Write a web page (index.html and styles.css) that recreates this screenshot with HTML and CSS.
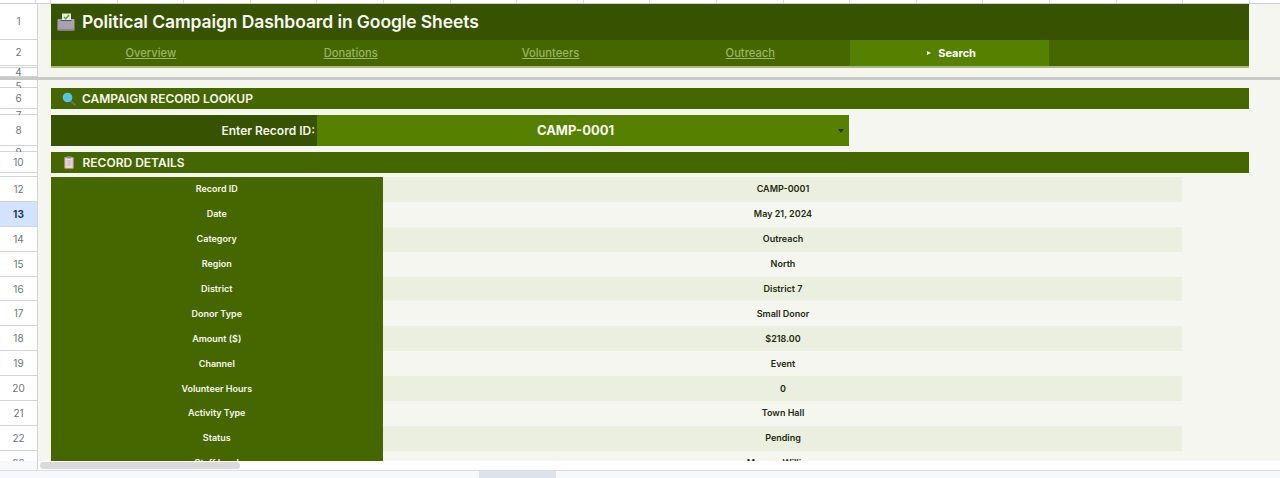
FILE: index.html
```html
<!DOCTYPE html>
<html lang="en">
<head>
<meta charset="utf-8">
<title>Political Campaign Dashboard in Google Sheets</title>
<link rel="stylesheet" href="styles.css">
</head>
<body>
<div class="app">
  <div class="colstrip"></div>
  <div class="grid">
    <div class="row h36"><div class="rh up">1</div><div class="cells"><div class="title">
      <svg class="ic-ballot" viewBox="0 0 18 18"><rect x="0.5" y="6" width="17" height="11.5" rx="1" fill="#a9a1b2"/><rect x="0.5" y="15.8" width="17" height="1.7" fill="#8f8898"/><rect x="5" y="0.5" width="9" height="7" fill="#e4ebe2"/><path d="M7 4l1.8 1.8L12 2" fill="none" stroke="#4f9a5a" stroke-width="1.4"/><rect x="3.5" y="7" width="11" height="1.1" fill="#5d5666"/></svg>
      <span>Political Campaign Dashboard in Google Sheets</span></div></div></div>
    <div class="row h28"><div class="rh up dbl">2</div><div class="cells"><nav class="nav">
      <a class="tab">Overview</a><a class="tab">Donations</a><a class="tab">Volunteers</a><a class="tab">Outreach</a><a class="tab on"><i class="tri"></i>Search</a><span class="tab"></span>
    </nav></div></div>
    <div class="row h9"><div class="rh">4</div><div class="cells"></div></div>
    <div class="freeze"></div>
    <div class="row h8"><div class="rh low">5</div><div class="cells"></div></div>
    <div class="row h21"><div class="rh">6</div><div class="cells"><div class="section">
      <svg class="ic-glass" viewBox="0 0 14 14"><path d="M8.5 8.5L13 13" stroke="#6b6f78" stroke-width="2.2" stroke-linecap="round"/><circle cx="5.5" cy="5.5" r="4.8" fill="#5cc3dc"/></svg>
      <span>CAMPAIGN RECORD LOOKUP</span></div></div></div>
    <div class="row h6"><div class="rh low">7</div><div class="cells"></div></div>
    <div class="row h31"><div class="rh">8</div><div class="cells"><div class="lookup">
      <div class="lk-label">Enter Record ID:</div>
      <div class="lk-value">CAMP-0001<i class="caret"></i></div>
    </div></div></div>
    <div class="row h6"><div class="rh low">9</div><div class="cells"></div></div>
    <div class="row h21"><div class="rh">10</div><div class="cells"><div class="section">
      <svg class="ic-clip" viewBox="0 0 10 13"><rect x="0.3" y="1" width="9.4" height="11.7" rx="0.8" fill="#c9a27a"/><rect x="1.4" y="2.2" width="7.2" height="9.6" fill="#e9dfe6"/><rect x="2.8" y="0.2" width="4.4" height="2.2" fill="#8f8a96"/><path d="M2.6 5h4.8M2.6 7h4.8M2.6 9h4.8" stroke="#b59ac0" stroke-width="0.8"/></svg>
      <span>RECORD DETAILS</span></div></div></div>
    <div class="row h4"><div class="rh"></div><div class="cells"></div></div>
    <div class="row h25"><div class="rh">12</div><div class="cells rec"><div class="k">Record ID</div><div class="v alt">CAMP-0001</div></div></div>
    <div class="row h25"><div class="rh sel">13</div><div class="cells rec"><div class="k">Date</div><div class="v">May 21, 2024</div></div></div>
    <div class="row h25"><div class="rh">14</div><div class="cells rec"><div class="k">Category</div><div class="v alt">Outreach</div></div></div>
    <div class="row h25"><div class="rh">15</div><div class="cells rec"><div class="k">Region</div><div class="v">North</div></div></div>
    <div class="row h25"><div class="rh">16</div><div class="cells rec"><div class="k">District</div><div class="v alt">District 7</div></div></div>
    <div class="row h25"><div class="rh">17</div><div class="cells rec"><div class="k">Donor Type</div><div class="v">Small Donor</div></div></div>
    <div class="row h25"><div class="rh">18</div><div class="cells rec"><div class="k">Amount ($)</div><div class="v alt">$218.00</div></div></div>
    <div class="row h25"><div class="rh">19</div><div class="cells rec"><div class="k">Channel</div><div class="v">Event</div></div></div>
    <div class="row h25"><div class="rh">20</div><div class="cells rec"><div class="k">Volunteer Hours</div><div class="v alt">0</div></div></div>
    <div class="row h25"><div class="rh">21</div><div class="cells rec"><div class="k">Activity Type</div><div class="v">Town Hall</div></div></div>
    <div class="row h25"><div class="rh">22</div><div class="cells rec"><div class="k">Status</div><div class="v alt">Pending</div></div></div>
    <div class="row h25"><div class="rh">23</div><div class="cells rec"><div class="k">Staff Lead</div><div class="v">Morgan Williams</div></div></div>
  </div>
  <div class="hscroll"><div class="corner"></div><div class="thumb"></div></div>
  <div class="tabs"><div class="sheettab"></div></div>
</div>
</body>
</html>
```
FILE: styles.css
```css
* { box-sizing: border-box; }
html, body { margin: 0; padding: 0; height: 100%; overflow: hidden; background: #fff; }
body { font-family: Inter, Roboto, "Liberation Sans", sans-serif; }
.app { width: 1280px; height: 478px; display: flex; flex-direction: column; overflow: hidden; }

.colstrip {
  height: 4px; flex: none; background-color: #fff;
  background-image: repeating-linear-gradient(90deg, #d6d6d6 0 1px, transparent 1px 66.6px);
  background-position: 50px 0;
  border-bottom: 1px solid #cfcfcf;
}
.grid { height: 457px; flex: none; overflow: hidden; display: flex; flex-direction: column; }
.row { display: flex; flex: none; overflow: hidden; }
.h36 { height: 36px; } .h28 { height: 28px; } .h9 { height: 9px; } .h8 { height: 8px; }
.h21 { height: 21px; } .h6 { height: 6px; } .h31 { height: 31px; } .h4 { height: 4px; } .h25 { height: 24.9px; }

.rh {
  width: 38px; flex: none; display: flex; align-items: center; justify-content: center;
  background: #fff; border-right: 1px solid #d4d4d4; border-bottom: 1px solid #d4d4d4;
  font-size: 10px; color: #70757a;
}
.rh.up { padding-bottom: 2px; }
.rh.dbl { border-bottom: 3px double #d4d4d4; }
.rh.low { align-items: flex-start; }
.rh.sel { background: #d3e3fd; color: #17386e; font-weight: 700; }
.cells { flex: 1; min-width: 0; background: #f4f6ef; padding: 0 31.5px 0 12.5px; display: flex; }

.title {
  flex: 1; display: flex; align-items: center; gap: 7px; padding-left: 6.5px;
  background: #375200; color: #f7f9f2; font-size: 17.5px; font-weight: 600; letter-spacing: -0.1px;
}
.title span { padding-bottom: 1px; }
.ic-ballot { width: 18px; height: 18px; flex: none; }

.nav { flex: 1; height: 28px; display: flex; background: #466600; border-bottom: 2px solid #a8bd7c; }
.tab {
  width: 199.8px; display: flex; align-items: center; justify-content: center; padding-left: 1px;
  font-size: 11.2px; font-weight: 500; color: #97b663; text-decoration: underline;
}
.tab:last-child { flex: 1; }
.tab.on { background: #558000; color: #fff; padding-left: 4px; font-size: 11px; font-weight: 700; text-decoration: none; }
.tri { width: 0; height: 0; margin-right: 7px; border-left: 4px solid #fff; border-top: 2.5px solid transparent; border-bottom: 2.5px solid transparent; }

.freeze { height: 3px; flex: none; background: #c9cac8; }

.section {
  flex: 1; display: flex; align-items: center; background: #466600; color: #f7f9f2;
  font-size: 12px; font-weight: 600; padding-left: 11.5px;
}
.section span { padding-bottom: 1px; }
.ic-glass { width: 14px; height: 14px; flex: none; margin-right: 6px; }
.ic-clip { width: 10px; height: 13px; flex: none; margin: 0 9px 0 1.5px; }

.lookup { display: flex; width: 798.5px; }
.lk-label {
  width: 266.5px; background: #375200; color: #f4f6ef; display: flex; align-items: center; justify-content: flex-end;
  padding-right: 2px; font-size: 12px; font-weight: 600;
}
.lk-value {
  flex: 1; background: #558000; color: #f7f9f2; display: flex; align-items: center; justify-content: center;
  padding: 0 15px 1px 0; font-size: 13px; font-weight: 700; position: relative;
}
.caret { position: absolute; right: 5px; top: 14px; width: 0; height: 0; border-top: 4px solid #24330a; border-left: 3px solid transparent; border-right: 3px solid transparent; }

.rec { font-size: 9px; font-weight: 600; }
.k { width: 332.5px; flex: none; padding-bottom: 1px; background: #466600; color: #f7f9f2; display: flex; align-items: center; justify-content: center; }
.v { width: 799px; flex: none; padding: 0 0 1px 1px; background: #f4f6ef; color: #1f2a10; display: flex; align-items: center; justify-content: center; }
.v.alt { background: #ebefdf; }

.hscroll { height: 10px; flex: none; display: flex; background: #fff; border-bottom: 1px solid #dcdcdc; position: relative; }
.corner { width: 38px; background: #f8f9fa; border-right: 1px solid #d4d4d4; }
.thumb { position: absolute; left: 40px; top: 1px; width: 200px; height: 7px; border-radius: 4px; background: #dadada; }
.tabs { flex: 1; background: #f7f8fc; padding-left: 479px; }
.sheettab { width: 77px; height: 100%; background: #dde3ec; }
```
